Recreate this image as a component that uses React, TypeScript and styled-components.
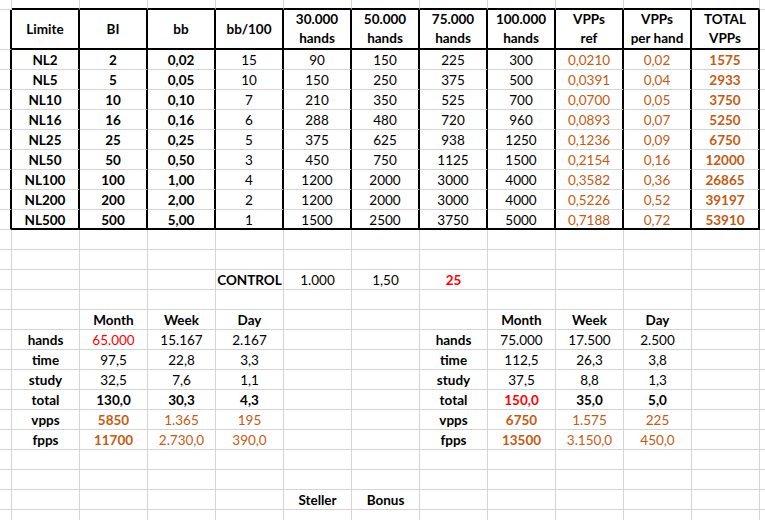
import styled, { createGlobalStyle } from "styled-components";

type Tone = "ink" | "red" | "orange";
type Entry = { text: string; bold?: boolean; tone?: Tone };
type Line = "thin" | "thick" | "none";

const toneColor: Record<Tone, string> = {
  ink: "#000000",
  red: "#ff0000",
  orange: "#c55a11",
};

const ROW_COUNT = 26;
const COL_COUNT = 13;

const e = (text: string, bold = false, tone: Tone = "ink"): Entry => ({
  text,
  bold,
  tone,
});

const header = [
  "Limite",
  "BI",
  "bb",
  "bb/100",
  "30.000\nhands",
  "50.000\nhands",
  "75.000\nhands",
  "100.000\nhands",
  "VPPs\nref",
  "VPPs\nper hand",
  "TOTAL\nVPPs",
];

const limits = [
  ["NL2", "2", "0,02", "15", "90", "150", "225", "300", "0,0210", "0,02", "1575"],
  ["NL5", "5", "0,05", "10", "150", "250", "375", "500", "0,0391", "0,04", "2933"],
  ["NL10", "10", "0,10", "7", "210", "350", "525", "700", "0,0700", "0,05", "3750"],
  ["NL16", "16", "0,16", "6", "288", "480", "720", "960", "0,0893", "0,07", "5250"],
  ["NL25", "25", "0,25", "5", "375", "625", "938", "1250", "0,1236", "0,09", "6750"],
  ["NL50", "50", "0,50", "3", "450", "750", "1125", "1500", "0,2154", "0,16", "12000"],
  ["NL100", "100", "1,00", "4", "1200", "2000", "3000", "4000", "0,3582", "0,36", "26865"],
  ["NL200", "200", "2,00", "2", "1200", "2000", "3000", "4000", "0,5226", "0,52", "39197"],
  ["NL500", "500", "5,00", "1", "1500", "2500", "3750", "5000", "0,7188", "0,72", "53910"],
];

// style of each column in the limits table (B..L)
const limitStyle = (col: number, text: string): Entry => {
  if (col <= 2) return e(text, true);
  if (col <= 7) return e(text);
  if (col <= 9) return e(text, false, "orange");
  return e(text, true, "orange");
};

// sheet row index -> column index -> entry
const sheet: Record<number, Record<number, Entry>> = {};

sheet[1] = Object.fromEntries(header.map((h, i) => [i + 1, e(h, true)]));
limits.forEach((row, r) => {
  sheet[r + 2] = Object.fromEntries(row.map((v, i) => [i + 1, limitStyle(i, v)]));
});

sheet[13] = {
  4: e("CONTROL", true),
  5: e("1.000"),
  6: e("1,50"),
  7: e("25", true, "red"),
};
sheet[15] = {
  2: e("Month", true),
  3: e("Week", true),
  4: e("Day", true),
  8: e("Month", true),
  9: e("Week", true),
  10: e("Day", true),
};
sheet[16] = {
  1: e("hands", true),
  2: e("65.000", false, "red"),
  3: e("15.167"),
  4: e("2.167"),
  7: e("hands", true),
  8: e("75.000"),
  9: e("17.500"),
  10: e("2.500"),
};
sheet[17] = {
  1: e("time", true),
  2: e("97,5"),
  3: e("22,8"),
  4: e("3,3"),
  7: e("time", true),
  8: e("112,5"),
  9: e("26,3"),
  10: e("3,8"),
};
sheet[18] = {
  1: e("study", true),
  2: e("32,5"),
  3: e("7,6"),
  4: e("1,1"),
  7: e("study", true),
  8: e("37,5"),
  9: e("8,8"),
  10: e("1,3"),
};
sheet[19] = {
  1: e("total", true),
  2: e("130,0", true),
  3: e("30,3", true),
  4: e("4,3", true),
  7: e("total", true),
  8: e("150,0", true, "red"),
  9: e("35,0", true),
  10: e("5,0", true),
};
sheet[20] = {
  1: e("vpps", true),
  2: e("5850", true, "orange"),
  3: e("1.365", false, "orange"),
  4: e("195", false, "orange"),
  7: e("vpps", true),
  8: e("6750", true, "orange"),
  9: e("1.575", false, "orange"),
  10: e("225", false, "orange"),
};
sheet[21] = {
  1: e("fpps", true),
  2: e("11700", true, "orange"),
  3: e("2.730,0", false, "orange"),
  4: e("390,0", false, "orange"),
  7: e("fpps", true),
  8: e("13500", true, "orange"),
  9: e("3.150,0", false, "orange"),
  10: e("450,0", false, "orange"),
};
sheet[24] = {
  5: e("Steller", true),
  6: e("Bonus", true),
};

const inTable = (r: number) => r >= 1 && r <= 10;

const rightLine = (r: number, c: number): Line => {
  if (c === COL_COUNT - 1) return "none";
  if (inTable(r) && c <= 11) return "thick";
  return "thin";
};

const bottomLine = (r: number, c: number): Line => {
  if (c >= 1 && c <= 11 && (r === 0 || r === 1 || r === 10)) return "thick";
  return "thin";
};

const rowHeight = (r: number) => (r === 0 ? "10px" : r === 1 ? "40px" : "20px");

export default function App() {
  const cells = [];
  for (let r = 0; r < ROW_COUNT; r++) {
    for (let c = 0; c < COL_COUNT; c++) {
      const entry = sheet[r]?.[c];
      cells.push(
        <Cell
          key={`${r}-${c}`}
          $right={rightLine(r, c)}
          $bottom={bottomLine(r, c)}
          $bold={!!entry?.bold}
          $tone={entry?.tone ?? "ink"}
          $stacked={r === 1}
        >
          {entry?.text}
        </Cell>
      );
    }
  }

  return (
    <>
      <GlobalStyle />
      <Sheet $rows={Array.from({ length: ROW_COUNT }, (_, r) => rowHeight(r)).join(" ")}>
        {cells}
      </Sheet>
    </>
  );
}

const GlobalStyle = createGlobalStyle`
  html, body {
    margin: 0;
    padding: 0;
    background: #ffffff;
    overflow: hidden;
  }
  body {
    font-family: Lato, "Liberation Sans", sans-serif;
  }
`;

const Sheet = styled.div<{ $rows: string }>`
  display: grid;
  grid-template-columns: 12px repeat(11, 68px) 1fr;
  grid-template-rows: ${props => props.$rows};
  width: 765px;
  height: 520px;
  overflow: hidden;
  background: #ffffff;
`;

const lineStyle = (line: Line) =>
  line === "thick" ? "2px solid #000000" : line === "thin" ? "1px solid #d4d4d4" : "none";

const Cell = styled.div<{
  $right: Line;
  $bottom: Line;
  $bold: boolean;
  $tone: Tone;
  $stacked: boolean;
}>`
  box-sizing: border-box;
  display: flex;
  align-items: center;
  justify-content: center;
  overflow: hidden;
  white-space: pre;
  text-align: center;
  padding-top: ${props => (props.$stacked ? "0" : "2px")};
  border-right: ${props => lineStyle(props.$right)};
  border-bottom: ${props => lineStyle(props.$bottom)};
  font-size: 13.5px;
  line-height: ${props => (props.$stacked ? "19px" : "17px")};
  font-weight: ${props => (props.$bold ? 700 : 400)};
  color: ${props => toneColor[props.$tone]};
`;
